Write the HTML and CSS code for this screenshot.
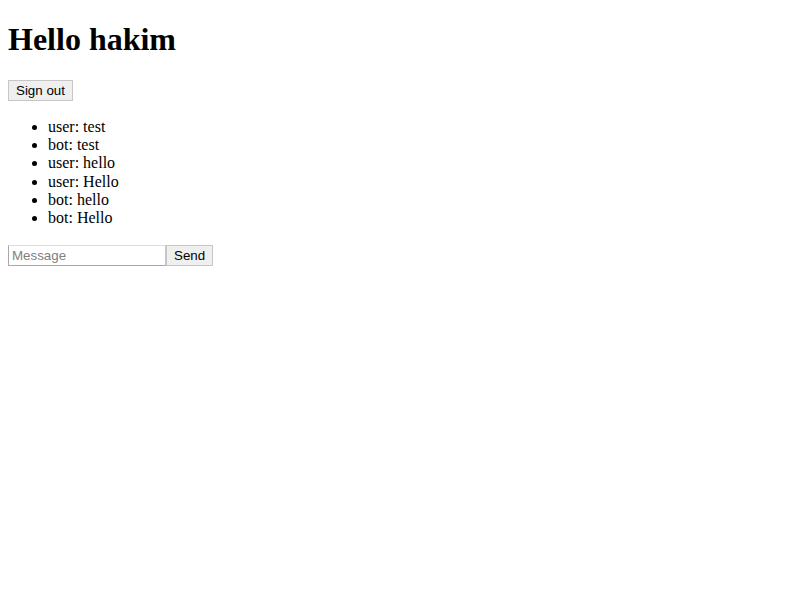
FILE: index.html
```html
<!DOCTYPE html>
<html>
<head>
<meta charset="utf-8">
<link rel="stylesheet" href="styles.css">
</head>
<body class="page">
<h1 class="title">Hello hakim</h1>
<button class="btn">Sign out</button>
<ul class="messages">
<li>user: test</li>
<li>bot: test</li>
<li>user: hello</li>
<li>user: Hello</li>
<li>bot: hello</li>
<li>bot: Hello</li>
</ul>
<form class="composer"><input class="field" type="text" placeholder="Message"><button class="btn" type="submit">Send</button></form>
</body>
</html>
```
FILE: styles.css
```css
html {
  margin: 0;
  padding: 0;
}
.page {
  margin: 0 8px 8px;
  padding: 0;
  font-family: "Liberation Serif", "Times New Roman", serif;
  font-size: 16px;
  line-height: 1.15;
  color: #000;
  background: #fff;
}
.title {
  font-size: 32px;
  line-height: 1.15;
  margin: 21.44px 0;
  font-weight: bold;
}
.btn {
  font-family: "Liberation Sans", Arial, sans-serif;
  font-size: 13.333px;
  line-height: normal;
  color: #000;
  background: #efefef;
  border: 1px solid #c6c6c6;
  border-radius: 0;
  padding: 1px 7px;
  height: 21px;
  box-sizing: border-box;
  margin: 0;
}
.messages {
  margin: 17px 0 18px;
  padding-left: 40px;
  line-height: 18.3px;
}
.composer {
  margin: 0;
}
.field {
  font-family: "Liberation Sans", Arial, sans-serif;
  font-size: 13.333px;
  width: 158px;
  height: 21px;
  box-sizing: border-box;
  padding: 1px 3px;
  margin: 0;
  border: 1px solid #a9a9a9;
  border-top-color: #dcdcdc;
  border-right-color: #c6c6c6;
  border-radius: 0;
  outline: none;
  background: #fff;
}
.field::placeholder {
  color: #808080;
}
```
